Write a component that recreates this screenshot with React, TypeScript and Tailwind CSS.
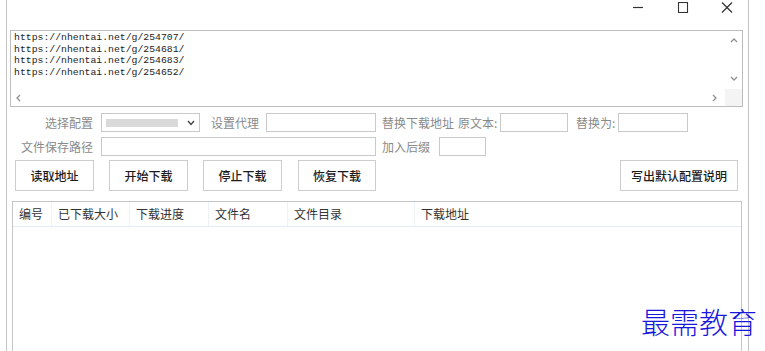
import React from "react";

const cjk = '"Noto Sans CJK SC", "Noto Sans", sans-serif';

function Chevron({ dir }: { dir: "up" | "down" | "left" | "right" }) {
  const pts: Record<string, string> = {
    up: "1,5 4,2 7,5",
    down: "1,2 4,5 7,2",
    left: "5,1 2,4 5,7",
    right: "2,1 5,4 2,7",
  };
  return (
    <svg width="8" height="8" viewBox="0 0 8 8">
      <polyline points={pts[dir]} fill="none" stroke="#8f8f8f" strokeWidth="1.3" />
    </svg>
  );
}

function Label({ children, className = "" }: { children: React.ReactNode; className?: string }) {
  return (
    <span className={`text-[12px] leading-none text-[#8a8a8a] whitespace-nowrap ${className}`}>{children}</span>
  );
}

function Input({ className = "" }: { className?: string }) {
  return <div className={`h-[19px] border border-[#c9c9c9] bg-white ${className}`} />;
}

function Btn({ children, className = "" }: { children: React.ReactNode; className?: string }) {
  return (
    <div
      className={`h-[31px] border border-[#cdcdcd] bg-white flex items-center justify-center text-[12px] text-[#1c1c1c] font-medium ${className}`}
    >
      {children}
    </div>
  );
}

export default function App() {
  const urls = [
    "https://nhentai.net/g/254707/",
    "https://nhentai.net/g/254681/",
    "https://nhentai.net/g/254683/",
    "https://nhentai.net/g/254652/",
  ];
  const cols = [
    { t: "编号", w: 39 },
    { t: "已下载大小", w: 78 },
    { t: "下载进度", w: 79 },
    { t: "文件名", w: 79 },
    { t: "文件目录", w: 127 },
  ];
  return (
    <div className="relative w-[765px] h-[351px] bg-white overflow-hidden" style={{ fontFamily: cjk }}>
      <div className="ml-[6px] w-[743px] h-[351px] border-l border-r border-[#c4c4c4] flex flex-col">
        {/* title bar */}
        <div className="h-[30px] flex items-start justify-end pr-[15px] pt-[2px]">
          <svg width="12" height="11" viewBox="0 0 12 11" className="mr-[33px]">
            <line x1="1" y1="5.5" x2="11" y2="5.5" stroke="#333" strokeWidth="1.2" />
          </svg>
          <svg width="12" height="11" viewBox="0 0 12 11" className="mr-[32px]">
            <rect x="1.5" y="0.5" width="9" height="10" fill="none" stroke="#333" strokeWidth="1.1" />
          </svg>
          <svg width="12" height="11" viewBox="0 0 12 11">
            <line x1="1" y1="0.5" x2="11" y2="10.5" stroke="#333" strokeWidth="1.2" />
            <line x1="11" y1="0.5" x2="1" y2="10.5" stroke="#333" strokeWidth="1.2" />
          </svg>
        </div>

        {/* textarea */}
        <div className="ml-[3px] w-[733px] h-[77px] border border-[#bdbdbd] flex flex-col">
          <div className="flex flex-1">
            <div
              className="flex-1 pl-[3px] pt-[1px] text-[9.8px] leading-[11.7px] text-[#222]"
              style={{ fontFamily: '"Liberation Mono", monospace' }}
            >
              {urls.map((u) => (
                <div key={u}>{u}</div>
              ))}
            </div>
            <div className="w-[17px] flex flex-col items-center justify-between pt-[6px] pb-[6px]">
              <Chevron dir="up" />
              <Chevron dir="down" />
            </div>
          </div>
          <div className="h-[17px] flex">
            <div className="flex-1 flex items-center justify-between pl-[4px] pr-[6px]">
              <Chevron dir="left" />
              <Chevron dir="right" />
            </div>
            <div className="w-[17px] bg-[#f4f4f4]" />
          </div>
        </div>

        {/* row 1 */}
        <div className="mt-[6px] flex items-center h-[19px]">
          <Label className="w-[86px] text-right">选择配置</Label>
          <div className="ml-[8px] w-[99px] h-[19px] border border-[#c9c9c9] bg-white flex items-center pl-[4px] pr-[4px]">
            <div className="w-[72px] h-[8px] bg-[#d9d9d9]" />
            <div className="ml-auto">
              <svg width="8" height="6" viewBox="0 0 8 6">
                <polyline points="1,1 4,4.5 7,1" fill="none" stroke="#444" strokeWidth="1.4" />
              </svg>
            </div>
          </div>
          <Label className="ml-[11px] w-[48px]">设置代理</Label>
          <Input className="ml-[7px] w-[110px]" />
          <Label className="ml-[6px] w-[72px]">替换下载地址</Label>
          <Label className="ml-[4px] w-[40px]">原文本:</Label>
          <Input className="ml-[2px] w-[68px]" />
          <Label className="ml-[8px] w-[40px]">替换为:</Label>
          <Input className="ml-[2px] w-[70px]" />
        </div>

        {/* row 2 */}
        <div className="mt-[5px] flex items-center h-[19px]">
          <Label className="w-[86px] text-right">文件保存路径</Label>
          <Input className="ml-[8px] w-[275px]" />
          <Label className="ml-[6px] w-[48px]">加入后缀</Label>
          <Input className="ml-[9px] w-[47px]" />
        </div>

        {/* row 3 buttons */}
        <div className="mt-[4px] flex items-center">
          <Btn className="ml-[8px] w-[79px]">读取地址</Btn>
          <Btn className="ml-[15px] w-[79px]">开始下载</Btn>
          <Btn className="ml-[15px] w-[79px]">停止下载</Btn>
          <Btn className="ml-[16px] w-[78px]">恢复下载</Btn>
          <Btn className="ml-auto mr-[10px] w-[118px]">写出默认配置说明</Btn>
        </div>

        {/* table */}
        <div className="mt-[10px] ml-[5px] w-[730px] flex-1 border-l border-r border-t border-[#c6c6c6] bg-white">
          <div className="h-[25px] flex border-b border-[#e3eaf4]">
            {cols.map((c) => (
              <div
                key={c.t}
                className="h-full flex items-center pl-[6px] border-r border-[#eef1f5] text-[12px] text-[#333]"
                style={{ width: c.w }}
              >
                {c.t}
              </div>
            ))}
            <div className="h-full flex items-center pl-[6px] text-[12px] text-[#333]">下载地址</div>
          </div>
        </div>
      </div>

      {/* watermark */}
      <div
        className="absolute left-[641px] top-[307px] text-[29px] leading-none text-[#1818dc] font-light"
        style={{ fontFamily: cjk }}
      >
        最需教育
      </div>
    </div>
  );
}
